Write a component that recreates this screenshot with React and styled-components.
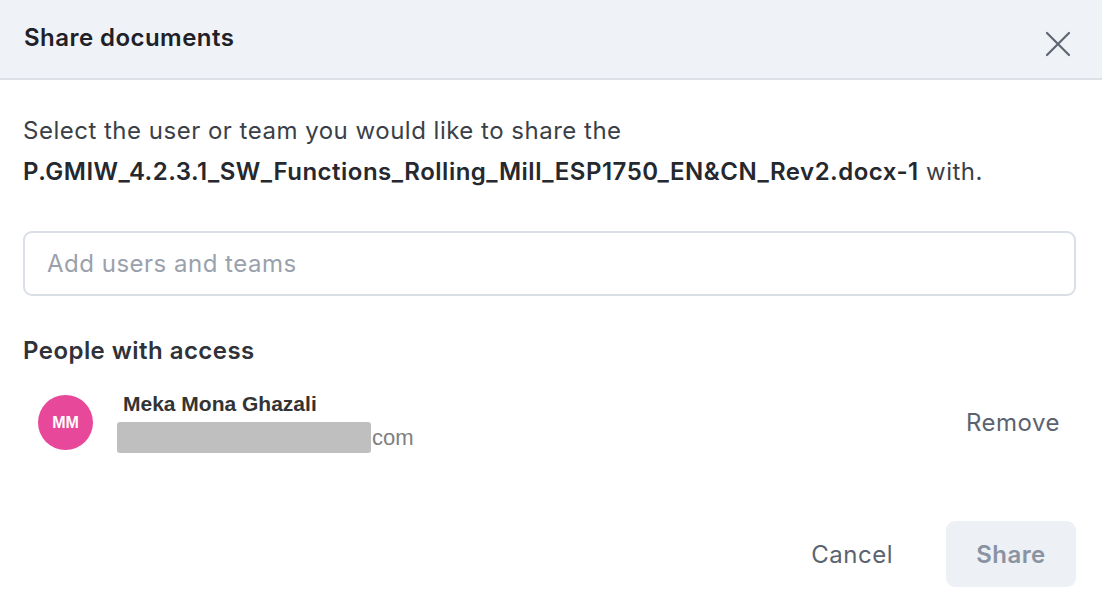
import React from "react";
import styled, { createGlobalStyle } from "styled-components";

const GlobalStyle = createGlobalStyle`
  html, body {
    margin: 0;
    padding: 0;
    background: #ffffff;
  }
  body {
    font-family: Inter, "Noto Sans", sans-serif;
  }
`;

const Dialog = styled.div`
  width: 1102px;
  height: 610px;
  display: flex;
  flex-direction: column;
  background: #ffffff;
  overflow: hidden;
`;

const Header = styled.div`
  height: 78px;
  flex-shrink: 0;
  display: flex;
  align-items: center;
  justify-content: space-between;
  padding: 0 31px 0 24px;
  background: #eff2f7;
  border-bottom: 2px solid #dde1e7;
`;

const Title = styled.h2`
  margin: 0 0 4px 0;
  font-size: 24px;
  letter-spacing: 0.45px;
  font-weight: 600;
  color: #1e2127;
`;

const CloseButton = styled.button`
  border: none;
  background: none;
  padding: 0;
  width: 26px;
  height: 26px;
  display: flex;
  align-items: center;
  justify-content: center;
  margin-top: 10px;
  cursor: pointer;
`;

const Body = styled.div`
  padding: 30px 26px 0 23px;
`;

const Intro = styled.p`
  margin: 0;
  font-size: 24px;
  letter-spacing: 0.5px;
  line-height: 41px;
  color: #3b3f47;
`;

const FileName = styled.strong`
  font-weight: 600;
  color: #25282e;
`;

const SearchInput = styled.input`
  box-sizing: border-box;
  display: block;
  width: 100%;
  height: 65px;
  margin-top: 39px;
  padding: 0 22px;
  border: 2px solid #dadfe6;
  border-radius: 9px;
  font-family: Inter, sans-serif;
  font-size: 24px;
  letter-spacing: 0.5px;
  color: #2a2d33;
  outline: none;

  &::placeholder {
    color: #9aa1ac;
  }
`;

const SectionTitle = styled.h3`
  margin: 40px 0 0 0;
  font-size: 24px;
  letter-spacing: 0.45px;
  line-height: 30px;
  font-weight: 600;
  color: #2f3238;
`;

const PersonRow = styled.div`
  display: flex;
  align-items: center;
  margin-top: 26px;
  padding-left: 15px;
`;

const Avatar = styled.div`
  width: 55px;
  height: 55px;
  border-radius: 50%;
  flex-shrink: 0;
  background: ${(p) => p.color};
  color: #ffffff;
  display: flex;
  align-items: center;
  justify-content: center;
  font-family: "Liberation Sans", Arial, sans-serif;
  font-weight: 700;
  font-size: 16px;
`;

const PersonInfo = styled.div`
  flex: 1;
  display: flex;
  flex-direction: column;
  margin-left: 30px;
  font-family: "Liberation Sans", Arial, sans-serif;
`;

const PersonName = styled.div`
  font-size: 21px;
  font-weight: 700;
  line-height: 24px;
  color: #333333;
`;

const PersonEmail = styled.div`
  display: flex;
  align-items: center;
  margin-top: 6px;
  margin-left: -6px;
  font-size: 22px;
  color: #808080;
`;

const Redacted = styled.span`
  display: inline-block;
  width: ${(p) => p.width}px;
  height: 31px;
  background: #bfbfbf;
  border-radius: 3px;
  margin-right: 1px;
`;

const TextButton = styled.button`
  border: none;
  background: none;
  font-family: Inter, sans-serif;
  font-size: 24px;
  letter-spacing: 0.5px;
  color: #5c6370;
  cursor: pointer;
  padding: ${(p) => p.padding || "0"};
`;

const Footer = styled.div`
  margin-top: auto;
  display: flex;
  justify-content: flex-end;
  align-items: center;
  padding: 0 26px 23px 0;
`;

const PrimaryButton = styled.button`
  width: 130px;
  height: 66px;
  border: none;
  border-radius: 9px;
  background: #edf0f4;
  color: #8a93a1;
  font-family: Inter, sans-serif;
  font-size: 24px;
  letter-spacing: 0.45px;
  font-weight: 600;
  cursor: not-allowed;
`;

const CloseIcon = () => (
  <svg width="26" height="26" viewBox="0 0 26 26" fill="none">
    <path
      d="M2 2L24 24M24 2L2 24"
      stroke="#5f6573"
      strokeWidth="2.2"
      strokeLinecap="round"
    />
  </svg>
);

const people = [
  { initials: "MM", name: "Meka Mona Ghazali", color: "#e8489a", hidden: 254, domain: "com" },
];

const App = () => {
  return (
    <>
      <GlobalStyle />
      <Dialog>
        <Header>
          <Title>Share documents</Title>
          <CloseButton aria-label="Close">
            <CloseIcon />
          </CloseButton>
        </Header>
        <Body>
          <Intro>
            Select the user or team you would like to share the
            <br />
            <FileName>P.GMIW_4.2.3.1_SW_Functions_Rolling_Mill_ESP1750_EN&amp;CN_Rev2.docx-1</FileName> with.
          </Intro>
          <SearchInput placeholder="Add users and teams" />
          <SectionTitle>People with access</SectionTitle>
          {people.map((person) => (
            <PersonRow key={person.name}>
              <Avatar color={person.color}>{person.initials}</Avatar>
              <PersonInfo>
                <PersonName>{person.name}</PersonName>
                <PersonEmail>
                  <Redacted width={person.hidden} />
                  {person.domain}
                </PersonEmail>
              </PersonInfo>
              <TextButton padding="0 16px 0 0">Remove</TextButton>
            </PersonRow>
          ))}
        </Body>
        <Footer>
          <TextButton padding="0 53px 0 0">Cancel</TextButton>
          <PrimaryButton>Share</PrimaryButton>
        </Footer>
      </Dialog>
    </>
  );
};

export default App;
